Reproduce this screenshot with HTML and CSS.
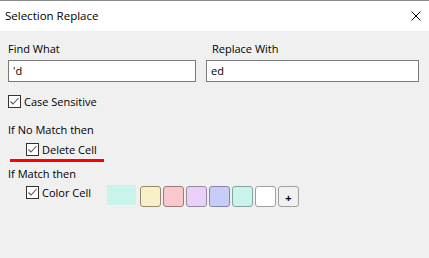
FILE: index.html
```html
<!DOCTYPE html>
<html lang="en">
<head>
<meta charset="UTF-8">
<title>Selection Replace</title>
<link rel="stylesheet" href="styles.css">
</head>
<body>
<div class="dialog">
    <div class="titlebar">
        <span class="title">Selection Replace</span>
        <svg class="close" width="10" height="10" viewBox="0 0 10 10">
            <path d="M0.5 0.5 L9.5 9.5 M9.5 0.5 L0.5 9.5" stroke="#000" stroke-width="1" fill="none"/>
        </svg>
    </div>

    <div class="content">
        <div class="fields">
            <div class="field">
                <label>Find What</label>
                <div class="input">'d</div>
            </div>
            <div class="field field-right">
                <label>Replace With</label>
                <div class="input">ed</div>
            </div>
        </div>

        <div class="check-row row-case">
            <span class="checkbox"><svg width="11" height="11" viewBox="0 0 11 11"><path d="M1.5 5.5 L4 8 L9.5 2" stroke="#555" stroke-width="1.1" fill="none"/></svg></span>
            <span>Case Sensitive</span>
        </div>

        <div class="section-label label-nomatch">If No Match then</div>
        <div class="check-row row-indent row-delete">
            <span class="checkbox"><svg width="11" height="11" viewBox="0 0 11 11"><path d="M1.5 5.5 L4 8 L9.5 2" stroke="#555" stroke-width="1.1" fill="none"/></svg></span>
            <span>Delete Cell</span>
        </div>
        <div class="underline"></div>

        <div class="section-label label-match">If Match then</div>
        <div class="color-row">
            <div class="check-row color-check">
                <span class="checkbox"><svg width="11" height="11" viewBox="0 0 11 11"><path d="M1.5 5.5 L4 8 L9.5 2" stroke="#555" stroke-width="1.1" fill="none"/></svg></span>
                <span>Color Cell</span>
            </div>
            <div class="preview"></div>
            <div class="swatches">
                <div class="swatch sw-yellow"></div>
                <div class="swatch sw-pink"></div>
                <div class="swatch sw-lilac"></div>
                <div class="swatch sw-blue"></div>
                <div class="swatch sw-mint"></div>
                <div class="swatch sw-white"></div>
                <div class="swatch sw-add">+</div>
            </div>
        </div>
    </div>
</div>
</body>
</html>
```

FILE: styles.css
```css
* {
    box-sizing: border-box;
}

body {
    margin: 0;
    font-family: 'Open Sans', 'Liberation Sans', sans-serif;
    font-size: 11px;
    color: #000;
    background: #f0f0f0;
}

.dialog {
    width: 429px;
    height: 258px;
    border-top: 1px solid #8a8a8a;
    background: #f0f0f0;
}

.titlebar {
    height: 30px;
    background: #fff;
    display: flex;
    align-items: center;
    justify-content: space-between;
    padding: 0 8px 0 5px;
}

.title {
    font-size: 11.5px;
    margin-top: -1px;
}

.content {
    padding: 10px 10px 0 8px;
}

.fields {
    display: grid;
    grid-template-columns: 188px 213px;
    gap: 10px;
}

.field label {
    display: block;
    height: 15px;
    line-height: 15px;
    margin-bottom: 4px;
}

.field-right label {
    padding-left: 6px;
}

.input {
    height: 22px;
    line-height: 20px;
    border: 1px solid #7a7a7a;
    background: #fff;
    padding-left: 4px;
}

.check-row {
    display: flex;
    align-items: center;
    height: 15px;
    line-height: 15px;
}

.checkbox {
    width: 13px;
    height: 13px;
    border: 1px solid #333;
    background: #fff;
    display: flex;
    align-items: center;
    justify-content: center;
    margin-right: 3px;
}

.row-case {
    margin-top: 12px;
}

.row-indent {
    padding-left: 18px;
}

.section-label {
    height: 15px;
    line-height: 15px;
}

.label-nomatch {
    margin-top: 13px;
}

.row-delete {
    margin-top: 5px;
}

.underline {
    width: 94px;
    height: 3px;
    margin: 2px 0 0 2px;
    background: #f00;
}

.label-match {
    margin-top: 4px;
}

.color-row {
    display: flex;
    align-items: flex-start;
    margin-top: 4px;
    padding-left: 18px;
}

.color-check {
    width: 81px;
}

.preview {
    width: 29px;
    height: 20px;
    background: #c8f4ec;
}

.swatches {
    display: flex;
    gap: 2px;
    margin: 1px 0 0 4px;
}

.swatch {
    width: 21px;
    height: 21px;
    border: 1px solid #999;
    border-radius: 3px;
}

.sw-yellow { background: #f8f0c8; border-color: #958a6e; }
.sw-pink { background: #f8c8cc; border-color: #9a7c7e; }
.sw-lilac { background: #e8d0f8; border-color: #958aa0; }
.sw-blue { background: #c8ccf8; border-color: #8586a8; }
.sw-mint { background: #c8f4ec; border-color: #86a49c; }
.sw-white { background: #fff; border-color: #a0a0a0; }

.sw-add {
    background: #f0f0f0;
    border-color: #a0a0a0;
    display: flex;
    align-items: center;
    justify-content: center;
    padding-top: 2px;
    font-size: 11px;
    font-weight: bold;
    line-height: 1;
}
```
